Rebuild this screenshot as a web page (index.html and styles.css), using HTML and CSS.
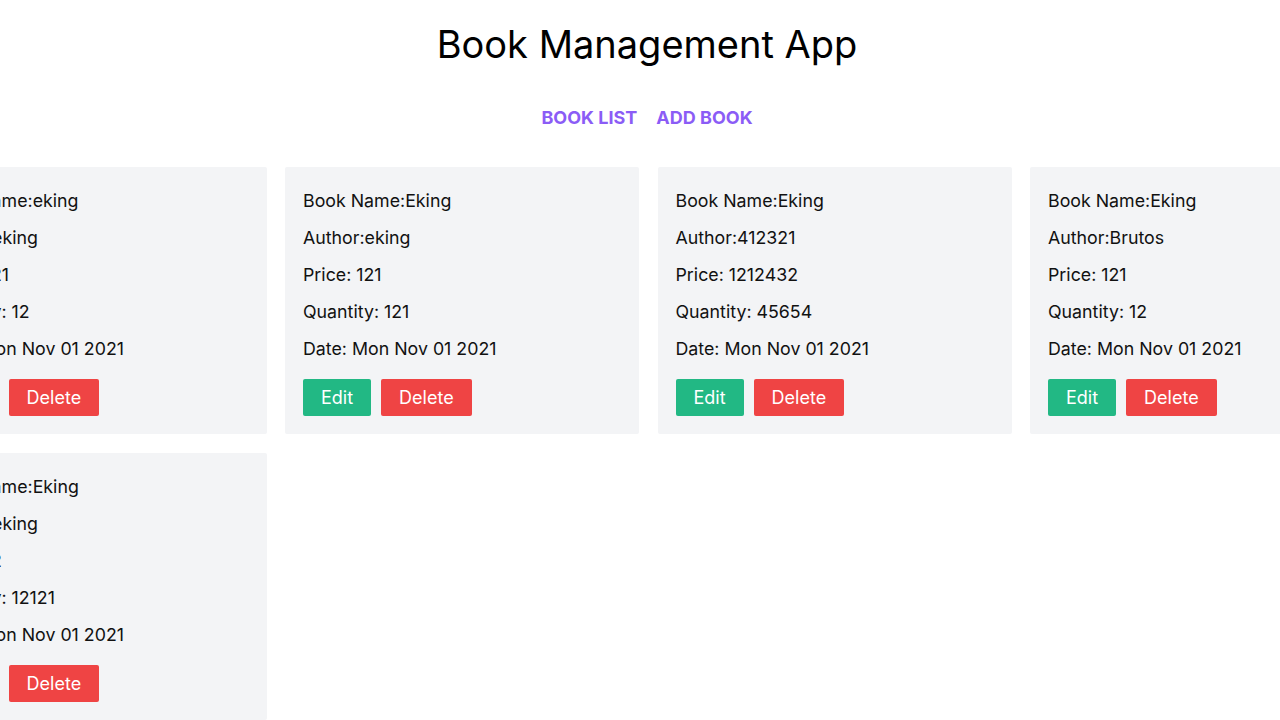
FILE: index.html
```html
<!DOCTYPE html>
<html lang="en">
<head>
<meta charset="utf-8">
<title>Book Management App</title>
<link rel="stylesheet" href="styles.css">
</head>
<body>
<header class="header">
  <h1 class="title">Book Management App</h1>
  <nav class="nav">
    <a class="nav-link" href="#">BOOK LIST</a>
    <a class="nav-link" href="#">ADD BOOK</a>
  </nav>
</header>
<main class="grid">
  <div class="card">
    <p class="line">Book Name:eking</p>
    <p class="line">Author:eking</p>
    <p class="line">Price: 121</p>
    <p class="line">Quantity: 12</p>
    <p class="line">Date: Mon Nov 01 2021</p>
    <div class="actions"><button class="btn btn-edit">Edit</button><button class="btn btn-delete">Delete</button></div>
  </div>
  <div class="card">
    <p class="line">Book Name:Eking</p>
    <p class="line">Author:eking</p>
    <p class="line">Price: 121</p>
    <p class="line">Quantity: 121</p>
    <p class="line">Date: Mon Nov 01 2021</p>
    <div class="actions"><button class="btn btn-edit">Edit</button><button class="btn btn-delete">Delete</button></div>
  </div>
  <div class="card">
    <p class="line">Book Name:Eking</p>
    <p class="line">Author:412321</p>
    <p class="line">Price: 1212432</p>
    <p class="line">Quantity: 45654</p>
    <p class="line">Date: Mon Nov 01 2021</p>
    <div class="actions"><button class="btn btn-edit">Edit</button><button class="btn btn-delete">Delete</button></div>
  </div>
  <div class="card">
    <p class="line">Book Name:Eking</p>
    <p class="line">Author:Brutos</p>
    <p class="line">Price: 121</p>
    <p class="line">Quantity: 12</p>
    <p class="line">Date: Mon Nov 01 2021</p>
    <div class="actions"><button class="btn btn-edit">Edit</button><button class="btn btn-delete">Delete</button></div>
  </div>
  <div class="card">
    <p class="line">Book Name:Eking</p>
    <p class="line">Author:eking</p>
    <p class="line">Price: 12</p>
    <p class="line">Quantity: 12121</p>
    <p class="line">Date: Mon Nov 01 2021</p>
    <div class="actions"><button class="btn btn-edit">Edit</button><button class="btn btn-delete">Delete</button></div>
  </div>
</main>
</body>
</html>
```
FILE: styles.css
```css
* { box-sizing: border-box; }
html, body {
  margin: 0;
  padding: 0;
  background: #ffffff;
  overflow: hidden;
}
body {
  font-family: "Inter", "Liberation Sans", sans-serif;
  color: #111111;
  width: 1280px;
  height: 720px;
}
.header {
  padding-left: 14px;
  text-align: center;
}
.title {
  margin: 0;
  padding-top: 21px;
  font-size: 38px;
  font-weight: 400;
  line-height: 46px;
  color: #000;
}
.nav {
  display: flex;
  justify-content: center;
  gap: 19px;
  margin-top: 40px;
}
.nav-link {
  font-size: 18px;
  font-weight: 700;
  line-height: 22px;
  color: #8b5cf6;
  text-decoration: none;
}
.grid {
  display: grid;
  grid-template-columns: repeat(4, 354px);
  column-gap: 18.5px;
  row-gap: 19px;
  margin-top: 38px;
  margin-left: -87.5px;
  width: 1472px;
}
.card {
  background: #f3f4f6;
  border-radius: 2px;
  padding: 20px 18px 18px;
}
.line {
  margin: 0 0 10px;
  font-size: 17.8px;
  line-height: 27px;
}
.line:last-of-type { margin-bottom: 0; }
.actions {
  display: flex;
  gap: 10px;
  margin-top: 17px;
}
.btn {
  font-family: inherit;
  font-size: 18px;
  line-height: 37px;
  height: 37px;
  padding: 0 18px;
  border: none;
  border-radius: 2px;
  color: #fff;
}
.btn-edit { background: #22b884; }
.btn-delete { background: #ef4444; }
```
